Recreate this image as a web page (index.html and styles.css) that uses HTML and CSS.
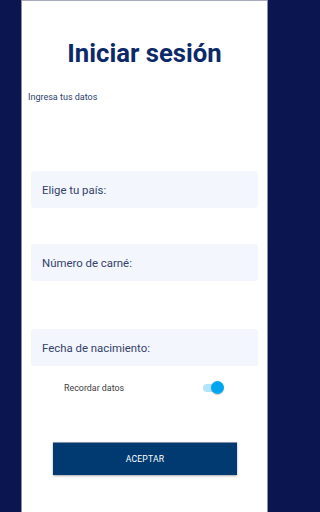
FILE: index.html
```html
<!DOCTYPE html>
<html lang="es">
<head>
<meta charset="utf-8">
<link rel="stylesheet" href="styles.css">
</head>
<body>
<div class="panel">
  <h1 class="title">Iniciar sesión</h1>
  <p class="subtitle">Ingresa tus datos</p>
  <div class="field field-pais">Elige tu país:</div>
  <div class="field field-carne">Número de carné:</div>
  <div class="field field-fecha">Fecha de nacimiento:</div>
  <div class="remember">
    <span class="remember-label">Recordar datos</span>
    <span class="switch"><span class="track"></span><span class="thumb"></span></span>
  </div>
  <button class="btn">ACEPTAR</button>
</div>
</body>
</html>
```
FILE: styles.css
```css
html {
  margin: 0;
  padding: 0;
  background: #0b1550;
}
body {
  margin: 0;
  padding: 0;
  width: 288px;
  height: 512px;
  background: #0b1550;
  font-family: Roboto, "Liberation Sans", sans-serif;
}
.panel {
  box-sizing: border-box;
  margin: 0 20px 0 21px;
  height: 512px;
  background: #ffffff;
  border-top: 1px solid #a7abbd;
  border-left: 1px solid #8c90a8;
  border-right: 1px solid #8c90a8;
  display: flex;
  flex-direction: column;
}
.title {
  margin: 38px 0 0 0;
  font-size: 25.7px;
  line-height: 29px;
  font-weight: 700;
  color: #0c2a69;
  text-align: center;
}
.subtitle {
  margin: 24px 0 0 6px;
  font-size: 9px;
  line-height: 11px;
  color: #2c3f6e;
}
.field {
  margin: 0 9px;
  height: 37px;
  box-sizing: border-box;
  padding-left: 11px;
  display: flex;
  align-items: center;
  background: #f3f6fd;
  border-radius: 3px;
  font-size: 11.4px;
  color: #33426b;
}
.field-pais { margin-top: 68px; }
.field-carne { margin-top: 36px; }
.field-fecha { margin-top: 48px; }
.remember {
  margin: 11px 0 0 42px;
  width: 160px;
  height: 22px;
  display: flex;
  align-items: center;
  justify-content: space-between;
}
.remember-label {
  font-size: 8.9px;
  color: #3d3d3d;
}
.switch {
  position: relative;
  width: 21px;
  height: 14px;
}
.track {
  position: absolute;
  left: 0;
  top: 3px;
  width: 19px;
  height: 8px;
  border-radius: 4px;
  background: #b4e4fa;
}
.thumb {
  position: absolute;
  right: 0;
  top: 0;
  width: 13px;
  height: 13px;
  border-radius: 50%;
  background: #03a5ee;
  box-shadow: 0 1px 1px rgba(0,0,0,0.2);
}
.btn {
  margin: 43px 0 0 31px;
  width: 184px;
  height: 33px;
  border: none;
  border-top: 1px solid #8490b0;
  background: #003a70;
  color: #ffffff;
  font-family: Roboto, "Liberation Sans", sans-serif;
  font-size: 8.6px;
  letter-spacing: 0.2px;
  box-shadow: 0 1px 2px rgba(0,0,0,0.35);
  padding: 0;
}
```
